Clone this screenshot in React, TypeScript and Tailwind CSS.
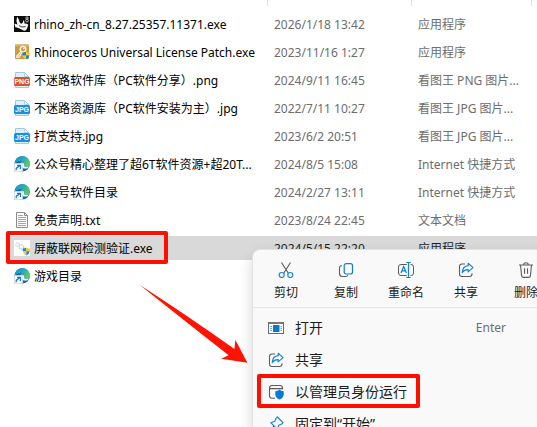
import type { ComponentType } from "react";

const RhinoIcon = () => (
  <svg viewBox="0 0 16 16" className="size-4 shrink-0">
    <rect width="16" height="16" fill="#0b0b0b" />
    <path d="M3 0.8 Q5 2.6 5.4 5.6 Q5.8 7.6 7.4 7.8 Q8.8 7.4 9.6 4 Q10.8 6 10.4 7.6 Q12.6 7.4 14.4 8.8 L12.8 13 Q12 15.2 9.5 14.6 L5.5 12.6 L1.2 11 L0.4 7.6 L3.4 8.4 Q1.8 5 3 0.8Z" fill="#f4f4f4" />
    <path d="M5 9.6 Q7.6 11.8 11.6 10.6" stroke="#444" strokeWidth="1" fill="none" />
    <circle cx="13" cy="2" r="1.2" stroke="#ddd" strokeWidth="0.8" fill="none" />
    <circle cx="13" cy="4.6" r="1.4" stroke="#ddd" strokeWidth="0.8" fill="none" />
  </svg>
);

const Shield = ({ x, y }: { x: number; y: number }) => (
  <g transform={`translate(${x} ${y})`}>
    <path d="M0 1 Q2 1 3.5 0 V3.8 H0Z" fill="#1c86d8" />
    <path d="M3.5 0 Q5 1 7 1 V3.8 H3.5Z" fill="#fcc91c" />
    <path d="M0 3.8 H3.5 V8 Q0.4 6.6 0 3.8Z" fill="#fcc91c" />
    <path d="M3.5 3.8 H7 Q6.6 6.6 3.5 8Z" fill="#1c86d8" />
  </g>
);

const KeyIcon = () => (
  <svg viewBox="0 0 16 16" className="size-4 shrink-0">
    <rect x="1" y="0.5" width="14" height="14.5" rx="1" fill="#cf9a43" />
    <rect x="1" y="0.5" width="14" height="2" fill="#dcb06a" />
    <circle cx="9" cy="5.2" r="2.8" fill="none" stroke="#fff6e0" strokeWidth="1.4" />
    <path d="M7.2 7.4 L2.8 12 V13.4 H5 V11.8 H6.6 V10.2 L8.2 8.6" fill="none" stroke="#fff6e0" strokeWidth="1.1" />
    <circle cx="9.8" cy="4.4" r="0.8" fill="#fff" />
    <Shield x={8.5} y={7.6} />
  </svg>
);

const ImageFileIcon = ({ kind }: { kind: "PNG" | "JPG" }) => (
  <svg viewBox="0 0 16 16" className="size-4 shrink-0">
    <path d="M1.5 0.5 H10.5 L14.5 4.5 V15.5 H1.5Z" fill="#dff0fa" stroke="#9fc9e4" />
    <path d="M10.5 0.5 V4.5 H14.5Z" fill="#fff" stroke="#9fc9e4" strokeWidth="0.8" />
    <rect y="5" width="16" height="9" rx="1.5" fill={kind === "PNG" ? "#dd5129" : "#1690e2"} />
    <text x="8" y="12.2" textAnchor="middle" fontSize="7" fontWeight="700" fill="#fff" fontFamily="Liberation Sans, sans-serif">
      {kind}
    </text>
  </svg>
);

const PngIcon = () => <ImageFileIcon kind="PNG" />;
const JpgIcon = () => <ImageFileIcon kind="JPG" />;

const EdgeIcon = () => (
  <svg viewBox="0 0 16 16" className="size-4 shrink-0">
    <defs>
      <linearGradient id="edge-top" x1="0" y1="0" x2="1" y2="0.6">
        <stop offset="0" stopColor="#1f8fd6" />
        <stop offset="0.5" stopColor="#28a9b8" />
        <stop offset="1" stopColor="#5fc962" />
      </linearGradient>
    </defs>
    <circle cx="8.2" cy="7.8" r="7.6" fill="#1467b3" />
    <path d="M0.6 7.8 A7.6 7.6 0 0 1 15.8 7.4 C15.8 10 13.6 11 11.8 11 C10 11 9.4 10.2 10 9.2 C10.8 7.4 9.3 5.4 6.8 5.2 C3.6 5 1.4 6.4 0.6 7.8Z" fill="url(#edge-top)" />
    <path d="M6 7.4 C7.6 5.6 10.6 6.6 10.2 9 C9.6 10.2 10.2 11 12 11 C13.2 11 14.6 10.6 15.2 10 L13.6 12.2 C11 13.4 6.6 12 6 7.4Z" fill="#f6fbfd" />
    <rect x="0.3" y="7.3" width="8.4" height="8.4" fill="#fff" stroke="#b9cfe9" strokeWidth="0.6" />
    <path d="M2.2 14.2 V12.4 L5.6 9.8 M3 9.4 H6.5 V12.9" fill="none" stroke="#1673d1" strokeWidth="1.2" />
  </svg>
);

const TextFileIcon = () => (
  <svg viewBox="0 0 16 16" className="size-4 shrink-0">
    <path d="M2.5 0.5 H10.5 L13.5 3.5 V15.5 H2.5Z" fill="#fcfcfc" stroke="#8b8b8b" />
    <path d="M10.5 0.5 V3.5 H13.5" fill="none" stroke="#8b8b8b" />
    <path d="M4 3.5 H9 M4 5.5 H12 M4 7.5 H12 M4 9.5 H12 M4 11.5 H12 M4 13.5 H12" stroke="#a5a5a5" />
  </svg>
);

const BatchExeIcon = () => (
  <svg viewBox="0 0 16 16" className="size-4 shrink-0">
    <rect width="16" height="16" fill="#fff" />
    <circle cx="3.6" cy="4.6" r="1.7" fill="none" stroke="#d9dcde" strokeWidth="1.6" strokeDasharray="1.4 0.6" />
    <circle cx="7.4" cy="7" r="2.2" fill="none" stroke="#d0d4d7" strokeWidth="1.8" strokeDasharray="1.6 0.6" />
    <Shield x={8.8} y={7.4} />
  </svg>
);

const CutIcon = () => (
  <svg viewBox="0 0 16 16" className="size-4" fill="none">
    <path d="M3.5 0.5 L10.3 11.3 M12.5 0.5 L5.7 11.3" stroke="#5c5c5c" strokeWidth="1.1" />
    <circle cx="3.7" cy="13" r="2.5" stroke="#1a85d6" strokeWidth="1.2" />
    <circle cx="12.3" cy="13" r="2.5" stroke="#1a85d6" strokeWidth="1.2" />
  </svg>
);

const CopyIcon = () => (
  <svg viewBox="0 0 16 16" className="size-4" fill="none">
    <path d="M4 3.8 H3 Q1.5 4 1.5 5.8 V11.5 Q1.5 14.5 4.5 14.5 H7.5 Q9.4 14.5 9.8 13.2" stroke="#5c5c5c" strokeWidth="1.1" />
    <rect x="6.2" y="1.6" width="8.3" height="10.4" rx="2" stroke="#0f7fd6" strokeWidth="1.2" />
  </svg>
);

const RenameIcon = () => (
  <svg viewBox="0 0 16 16" className="size-4" fill="none">
    <path d="M8.8 2.5 H3 Q0.5 2.5 0.5 5 V11 Q0.5 13.5 3 13.5 H8.8 M12.5 2.5 H13 Q15.5 2.5 15.5 5 V11 Q15.5 13.5 13 13.5 H12.5" stroke="#5c5c5c" />
    <path d="M8.3 0.5 H12.7 M10.5 0.5 V15.5 M8.3 15.5 H12.7" stroke="#0f7fd6" strokeWidth="1.2" />
    <path d="M3 11 L5.7 4.6 L8.4 11 M4 8.9 H7.4" stroke="#0f7fd6" strokeWidth="1.2" />
  </svg>
);

const ShareIcon = () => (
  <svg viewBox="0 0 16 16" className="size-4 shrink-0" fill="none">
    <path d="M7 2 H4 Q1.5 2 1.5 4.5 V12 Q1.5 14.5 4 14.5 H11.5 Q14 14.5 14 12 V11.3" stroke="#5c5c5c" strokeWidth="1.1" />
    <path d="M10.2 1.3 L15 5.6 L10.2 9.9 V7.6 C7.2 7.4 5.6 8.7 4.2 10.6 C4.5 6.7 6.4 4 10.2 3.7Z" stroke="#1a85d6" strokeWidth="1.2" strokeLinejoin="round" />
  </svg>
);

const DeleteIcon = () => (
  <svg viewBox="0 0 16 16" className="size-4" fill="none" stroke="#5c5c5c" strokeWidth="1.1">
    <path d="M1 3 H15 M5.7 3 Q5.7 0.7 8 0.7 Q10.3 0.7 10.3 3 M2.5 3 L3.5 13.3 Q3.8 15.4 5.6 15.4 H10.4 Q12.2 15.4 12.5 13.3 L13.5 3 M6.5 6.3 V11.7 M9.5 6.3 V11.7" />
  </svg>
);

const OpenIcon = () => (
  <svg viewBox="0 0 16 16" className="size-4 shrink-0">
    <rect x="0.5" y="2.5" width="15" height="11" fill="#fff" stroke="#6c6c6c" />
    <rect x="1" y="2" width="14" height="2" fill="#777" />
    <path d="M2 6.5 H4 M2 8.5 H4 M2 10.5 H4 M12.5 6.5 H14 M12.5 8.5 H14 M12.5 10.5 H14" stroke="#6fa8d2" />
    <rect x="5" y="5" width="6.5" height="7" fill="#0a78d0" />
  </svg>
);

const AdminIcon = () => (
  <svg viewBox="0 0 16 16" className="size-4 shrink-0" fill="none">
    <path d="M7 14.2 H4 Q1.5 14.2 1.5 11.7 V4 Q1.5 1.5 4 1.5 H12 Q14.5 1.5 14.5 4 V5.4 M1.5 4.6 H14.5" stroke="#5c5c5c" strokeWidth="1.1" />
    <path d="M11.5 5.6 Q13 7.2 15.7 7.3 V10.5 Q15.4 14 11.5 15.6 Q7.6 14 7.3 10.5 V7.3 Q10 7.2 11.5 5.6Z" fill="#0a78d6" />
  </svg>
);

const PinIcon = () => (
  <svg viewBox="0 0 16 16" className="size-4 shrink-0" fill="none" stroke="#1a85d6" strokeWidth="1.2" strokeLinejoin="round">
    <path d="M9.3 1 L15 6.7 L13.7 8 L10.8 9.2 L9.3 13.2 L2.8 6.7 L6.8 5.2 L8 2.3Z M6 10 L1 15" />
  </svg>
);

type FileRow = {
  icon: ComponentType;
  name: string;
  date: string;
  type: string;
  selected?: boolean;
};

const files: FileRow[] = [
  { icon: RhinoIcon, name: "rhino_zh-cn_8.27.25357.11371.exe", date: "2026/1/18 13:42", type: "应用程序" },
  { icon: KeyIcon, name: "Rhinoceros Universal License Patch.exe", date: "2023/11/16 1:27", type: "应用程序" },
  { icon: PngIcon, name: "不迷路软件库（PC软件分享）.png", date: "2024/9/11 16:45", type: "看图王 PNG 图片..." },
  { icon: JpgIcon, name: "不迷路资源库（PC软件安装为主）.jpg", date: "2022/7/11 10:27", type: "看图王 JPG 图片..." },
  { icon: JpgIcon, name: "打赏支持.jpg", date: "2023/6/2 20:51", type: "看图王 JPG 图片..." },
  { icon: EdgeIcon, name: "公众号精心整理了超6T软件资源+超20T...", date: "2024/8/5 15:08", type: "Internet 快捷方式" },
  { icon: EdgeIcon, name: "公众号软件目录", date: "2024/2/27 13:11", type: "Internet 快捷方式" },
  { icon: TextFileIcon, name: "免责声明.txt", date: "2023/8/24 22:45", type: "文本文档" },
  { icon: BatchExeIcon, name: "屏蔽联网检测验证.exe", date: "2024/5/15 22:20", type: "应用程序", selected: true },
  { icon: EdgeIcon, name: "游戏目录", date: "", type: "" },
];

const quickActions = [
  { icon: CutIcon, label: "剪切" },
  { icon: CopyIcon, label: "复制" },
  { icon: RenameIcon, label: "重命名" },
  { icon: ShareIcon, label: "共享" },
  { icon: DeleteIcon, label: "删除" },
];

const menuItems = [
  { icon: OpenIcon, label: "打开", shortcut: "Enter" },
  { icon: ShareIcon, label: "共享" },
  { icon: AdminIcon, label: "以管理员身份运行" },
  { icon: PinIcon, label: "固定到“开始”" },
];

const FileList = () => (
  <div className="pl-[10px]">
    {/* Column dividers */}
    <div className="flex h-[10px]">
      <div className="h-1.5 w-[258px] border-r border-[#e0e0e0]" />
      <div className="h-1.5 w-[144px] border-r border-[#e0e0e0]" />
      <div className="h-1.5 w-[120px] border-r border-[#e0e0e0]" />
    </div>
    <table className="w-full table-fixed border-collapse text-left whitespace-nowrap">
      <colgroup>
        <col className="w-[258px]" />
        <col className="w-[144px]" />
        <col />
      </colgroup>
      <tbody>
        {files.map((file) => {
          const cell = file.selected ? "flex h-6 items-center bg-[#d9d9d9] text-[#1f1f1f]" : "flex h-6 items-center text-[#6d6d6d]";
          return (
            <tr key={file.name} className="h-7">
              <td className="p-0">
                <div className={`${cell} gap-1 pl-1`}>
                  <file.icon />
                  <span className="pt-0.5 text-black">{file.name}</span>
                </div>
              </td>
              <td className="p-0">
                <div className={`${cell} pt-0.5 pl-1.5`}>{file.date}</div>
              </td>
              <td className="p-0">
                <div className={`${cell} pt-0.5 pl-1.5`}>{file.type}</div>
              </td>
            </tr>
          );
        })}
      </tbody>
    </table>
  </div>
);

const ContextMenu = () => (
  <div role="menu" className="absolute top-[249px] left-[252px] w-[310px] rounded-lg border border-[#e2e2e2] bg-[#f9f9f9] pb-1 text-[#1b1b1b] shadow-[0_6px_14px_rgba(0,0,0,0.16)]">
    <div className="flex border-b border-[#e5e5e5] px-[3px] pt-3 pb-1">
      {quickActions.map((action) => (
        <button key={action.label} type="button" className="flex w-[60px] shrink-0 flex-col items-center gap-[5px] leading-5">
          <action.icon />
          {action.label}
        </button>
      ))}
    </div>
    <div className="pt-1">
      {menuItems.map((item) => (
        <button key={item.label} type="button" role="menuitem" className="flex h-8 w-full items-center gap-[11px] pr-[55px] pl-[15px] text-sm">
          <item.icon />
          <span>{item.label}</span>
          {item.shortcut && <kbd className="ml-auto font-[inherit] text-xs text-[#6d6d6d]">{item.shortcut}</kbd>}
        </button>
      ))}
    </div>
  </div>
);

const Annotations = () => (
  <div aria-hidden="true" className="pointer-events-none">
    <div className="absolute top-[231px] left-[6px] h-[33px] w-[162px] rounded-xs border-4 border-[#ff0f00]" />
    <div className="absolute top-[374px] left-[257px] h-[34px] w-[163px] rounded-xs border-4 border-[#ff0f00]" />
    <svg viewBox="0 0 110 80" className="absolute top-[284px] left-[139px] h-20 w-[110px]">
      <path d="M0.5 0.8 Q46 30 95.4 65 L96.4 56 L108.4 78.8 L82.2 74.8 L89.6 71.2 Q52 42 0.5 0.8Z" fill="#ff1200" />
    </svg>
  </div>
);

const App = () => (
  <main className="relative h-screen overflow-hidden bg-white font-['Noto_Sans','Noto_Sans_CJK_SC',sans-serif] text-xs">
    <FileList />
    <ContextMenu />
    <Annotations />
  </main>
);

export default App;
